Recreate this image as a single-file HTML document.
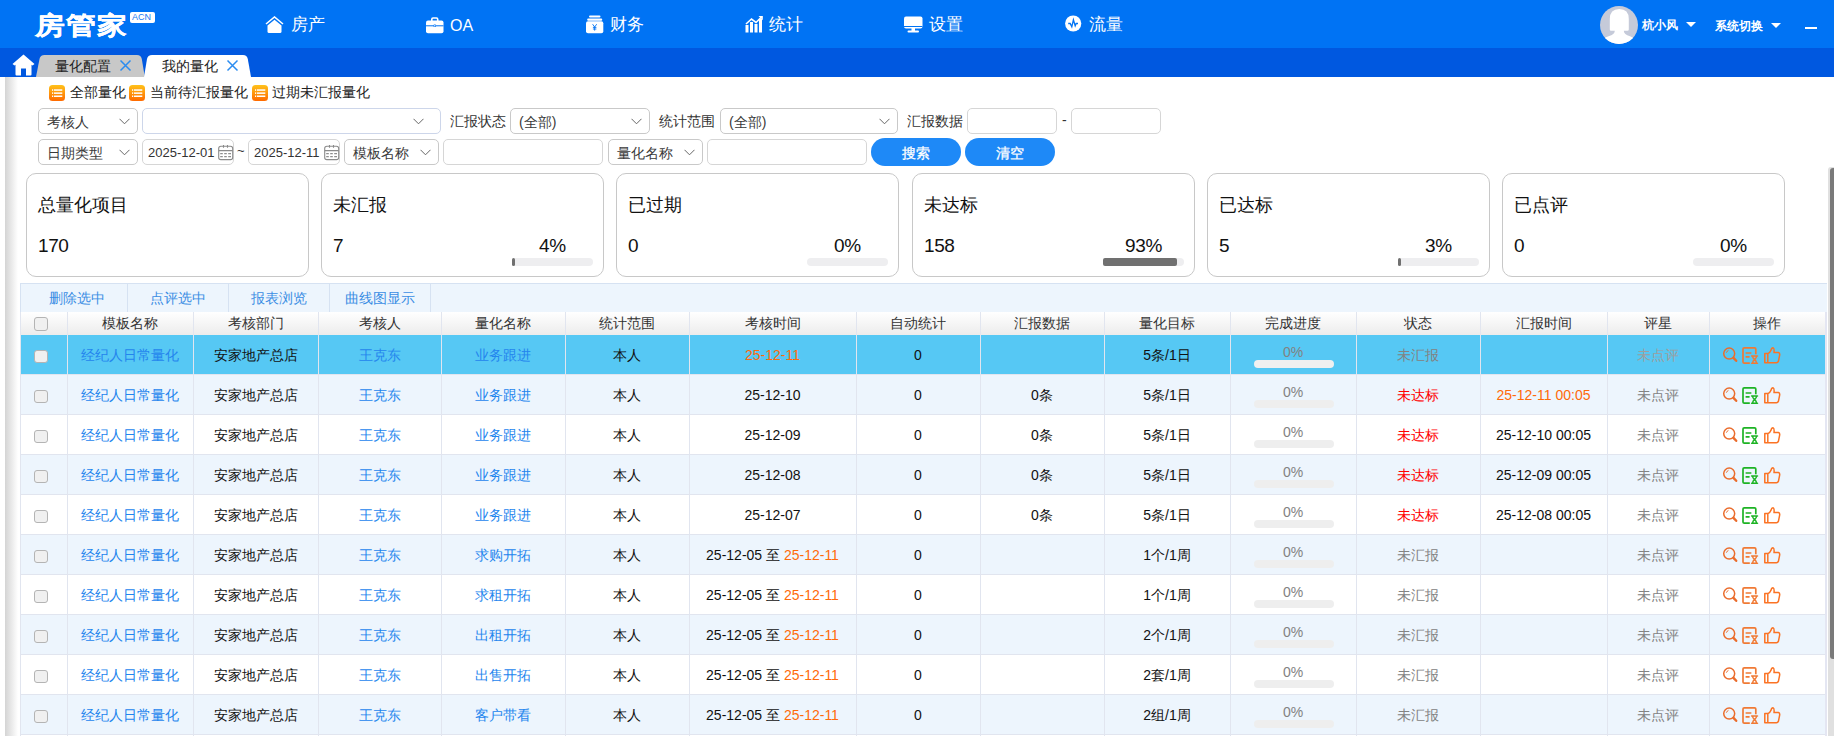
<!DOCTYPE html><html><head><meta charset="utf-8"><title>我的量化</title><style>
*{box-sizing:border-box;margin:0;padding:0}
html,body{width:1834px;height:736px;overflow:hidden;background:#fff}
body{position:relative;font-family:"Liberation Sans",sans-serif;color:#111;font-size:14px}
.ab{position:absolute}
.t{position:absolute;white-space:nowrap;line-height:1}
#hdr{left:0;top:0;width:1834px;height:48px;background:#0073f4}
#tabs{left:0;top:48px;width:1834px;height:29px;background:#0058e0}
.nav{color:#fff;font-size:16px}
.sel{position:absolute;height:26px;border:1px solid #c9c9c9;border-radius:5px;background:#fff}
.inp{position:absolute;height:26px;border:1px solid #d6d6d6;border-radius:5px;background:#fff}
.chev{position:absolute;width:11px;height:7px}
.btn{position:absolute;height:28px;border-radius:14px;background:#1e89f7;color:#fff;font-size:14px;text-align:center;line-height:30px;-webkit-text-stroke:0.3px #fff}
.card{position:absolute;top:173px;width:283px;height:104px;border:1px solid #c8c8c8;border-radius:10px;background:#fff}
.ct{position:absolute;left:11px;top:22px;font-size:18px;line-height:18px;white-space:nowrap}
.cn{position:absolute;left:11px;top:62px;font-size:19px;line-height:19px;white-space:nowrap;letter-spacing:-0.4px}
.cp{position:absolute;right:10px;width:81px;top:62px;font-size:19px;line-height:19px;white-space:nowrap;text-align:center;letter-spacing:-0.3px}
.trk{position:absolute;right:10px;top:84px;width:81px;height:8px;border-radius:4px;background:#eeeef0}
.fil{position:absolute;left:0;top:0;height:8px;background:#707070;border-radius:2px}
.cell{position:absolute;text-align:center;white-space:nowrap;font-size:14px;line-height:14px}
.lk{color:#2485ee}
.or{color:#ff6a0a}
.rd{color:#ff0000}
.gy{color:#828282}
.cb{position:absolute;width:14px;height:14px;border:1px solid #b4b4b4;border-radius:3px;background:#f0f0f0}
</style></head><body>
<div id="hdr" class="ab"></div>
<div class="t" style="left:35px;top:13px;font-size:30px;font-weight:bold;color:#fff;letter-spacing:1px;transform:scaleY(0.84);transform-origin:0 0;-webkit-text-stroke:0.35px #fff">房管家</div>
<div class="ab" style="left:130px;top:12px;width:25px;height:11px;background:#fff;border-radius:2px"></div>
<div class="t" style="left:132px;top:13px;font-size:9px;color:#1a78f2">ACN</div>
<div class="t nav" style="left:291px;top:15.5px;font-size:17px">房产</div>
<div class="t nav" style="left:610px;top:15.5px;font-size:17px">财务</div>
<div class="t nav" style="left:769px;top:15.5px;font-size:17px">统计</div>
<div class="t nav" style="left:928.5px;top:15.5px;font-size:17px">设置</div>
<div class="t nav" style="left:1088.5px;top:15.5px;font-size:17px">流量</div>
<div class="t nav" style="left:450px;top:17.5px;font-size:16px">OA</div>
<svg class="ab" style="left:265px;top:16px" width="19" height="17" viewBox="0 0 19 17"><path d="M1 8 L9.5 1 L18 8" fill="none" stroke="#fff" stroke-width="1.6"/><path d="M2.5 9.5 L9.5 3.8 L16.5 9.5 V15.5 Q16.5 17 15 17 H4 Q2.5 17 2.5 15.5Z" fill="#fff"/></svg>
<svg class="ab" style="left:426px;top:17px" width="18" height="17" viewBox="0 0 18 17"><path d="M5.8 4 V2.2 Q5.8 1 7 1 H10.5 Q11.7 1 11.7 2.2 V4" fill="none" stroke="#fff" stroke-width="1.6"/><rect x="0" y="3.5" width="17.5" height="12.8" rx="2" fill="#fff"/><rect x="0" y="8.3" width="17.5" height="1" fill="#0073f4"/><rect x="7.6" y="7.5" width="2.3" height="2.6" rx="0.5" fill="#0073f4"/><rect x="8.2" y="8.1" width="1.1" height="1.4" fill="#fff"/></svg>
<svg class="ab" style="left:586px;top:15px" width="18" height="19" viewBox="0 0 18 19"><rect x="3" y="0.6" width="11.5" height="2" rx="1" fill="#fff"/><rect x="1.2" y="3.5" width="15" height="2.2" rx="1" fill="#fff"/><rect x="0" y="6.3" width="17.3" height="11.9" rx="2" fill="#fff"/><path d="M6.6 9.2 L8.65 12 L10.7 9.2 M8.65 12 V15.6 M6.9 12.4 H10.4 M6.9 14 H10.4" fill="none" stroke="#0073f4" stroke-width="0.9"/></svg>
<svg class="ab" style="left:745px;top:15px" width="19" height="18" viewBox="0 0 19 18"><rect x="0.5" y="10" width="3" height="7.5" fill="#fff"/><rect x="5" y="7" width="3" height="10.5" fill="#fff"/><rect x="9.5" y="9" width="3" height="8.5" fill="#fff"/><rect x="14" y="4" width="3" height="13.5" fill="#fff"/><path d="M1 9 L6.5 4 L11 7.5 L17 1.5" fill="none" stroke="#fff" stroke-width="1.6"/><path d="M13.5 1 H17.8 V5.3Z" fill="#fff"/></svg>
<svg class="ab" style="left:904px;top:16px" width="19" height="17" viewBox="0 0 19 17"><rect x="0" y="0.5" width="18.5" height="12" rx="2" fill="#fff"/><rect x="7.5" y="12" width="3.5" height="3" fill="#fff"/><rect x="3.5" y="14.5" width="11.5" height="2" rx="1" fill="#fff"/><rect x="0" y="10" width="18.5" height="1" fill="#0073f4"/></svg>
<svg class="ab" style="left:1065px;top:15px" width="17" height="17" viewBox="0 0 17 17"><circle cx="8.2" cy="8.5" r="8.1" fill="#fff"/><path d="M3.2 8.5 H5.2 L6.8 11.8 L8.4 4.8 L10.2 10.8 L11.2 8.5 H13" fill="none" stroke="#0073f4" stroke-width="1.3"/></svg>
<svg class="ab" style="left:1600px;top:6px" width="38" height="38" viewBox="0 0 38 38"><defs><clipPath id="cc"><circle cx="19" cy="19" r="19"/></clipPath></defs><circle cx="19" cy="19" r="19" fill="#c5cad9"/><g clip-path="url(#cc)" fill="#fff"><path d="M9.8 23.5 V13 Q9.8 3 19.3 3 Q28.8 3 28.8 13 V23.5 Q28.8 24.8 27.5 24.8 H23.8 Q23.8 28.6 30 30.2 Q35 31.8 38 36 V38 H0 V36 Q3 31.8 8.6 30.2 Q14.8 28.6 14.8 24.8 H11 Q9.8 24.8 9.8 23.5Z"/></g></svg>
<div class="t" style="left:1641.5px;top:18.5px;font-size:12px;font-weight:bold;color:#fff">杭小风</div>
<div class="ab" style="left:1686px;top:22px;width:0;height:0;border-left:5px solid transparent;border-right:5px solid transparent;border-top:5px solid #fff"></div>
<div class="t" style="left:1715px;top:20px;font-size:12px;font-weight:bold;color:#fff">系统切换</div>
<div class="ab" style="left:1771px;top:23px;width:0;height:0;border-left:5px solid transparent;border-right:5px solid transparent;border-top:5px solid #fff"></div>
<div class="ab" style="left:1805px;top:27px;width:12px;height:2px;background:#fff"></div>
<div id="tabs" class="ab"></div>
<svg class="ab" style="left:12px;top:54px" width="23" height="22" viewBox="0 0 23 22"><path d="M11.5 0.5 L22.5 10 L20.5 11.5 L19.5 10.8 V20.5 Q19.5 21.5 18.5 21.5 H14 V14.5 H9 V21.5 H4.5 Q3.5 21.5 3.5 20.5 V10.8 L2.5 11.5 L0.5 10Z" fill="#fff"/></svg>
<svg class="ab" style="left:36px;top:55px" width="110" height="22" viewBox="0 0 110 22"><path d="M0 22 L3.5 4 Q4.3 0 8.5 0 H101 Q105 0 105.8 4 L108.8 22Z" fill="#c8c8c8"/></svg>
<div class="t" style="left:55px;top:59px;font-size:14px;color:#222">量化配置</div>
<svg class="ab" style="left:119px;top:59px" width="13" height="13" viewBox="0 0 13 13"><path d="M1.5 1.5 L11.5 11.5 M11.5 1.5 L1.5 11.5" stroke="#2b8cf0" stroke-width="1.5"/></svg>
<svg class="ab" style="left:143px;top:55px" width="110" height="22" viewBox="0 0 110 22"><path d="M1 22 L4 4 Q4.8 0 9 0 H100 Q104 0 104.8 4 L108 22Z" fill="#fff"/></svg>
<div class="t" style="left:162px;top:59px;font-size:14px;color:#222">我的量化</div>
<svg class="ab" style="left:226px;top:59px" width="13" height="13" viewBox="0 0 13 13"><path d="M1.5 1.5 L11.5 11.5 M11.5 1.5 L1.5 11.5" stroke="#2b8cf0" stroke-width="1.5"/></svg>
<div class="ab" style="left:5px;top:77px;width:13px;height:659px;background:linear-gradient(to right,#d4d4d4,#fff)"></div>
<svg class="ab" style="left:49px;top:85px" width="16" height="16" viewBox="0 0 16 16"><defs><linearGradient id="og49" x1="0" y1="0" x2="0" y2="1"><stop offset="0" stop-color="#ffc21a"/><stop offset="1" stop-color="#ff6a00"/></linearGradient></defs><rect x="0" y="0" width="16" height="16" rx="3.5" fill="url(#og49)"/><g fill="#fff"><rect x="3" y="4.3" width="1.2" height="1.5"/><rect x="5" y="4.3" width="8.3" height="1.5"/><rect x="3" y="7.4" width="1.2" height="1.5"/><rect x="5" y="7.4" width="8.3" height="1.5"/><rect x="3" y="10.5" width="1.2" height="1.5"/><rect x="5" y="10.5" width="8.3" height="1.5"/></g></svg>
<div class="t" style="left:70px;top:85px;font-size:14px;color:#222">全部量化</div>
<svg class="ab" style="left:129px;top:85px" width="16" height="16" viewBox="0 0 16 16"><defs><linearGradient id="og129" x1="0" y1="0" x2="0" y2="1"><stop offset="0" stop-color="#ffc21a"/><stop offset="1" stop-color="#ff6a00"/></linearGradient></defs><rect x="0" y="0" width="16" height="16" rx="3.5" fill="url(#og129)"/><g fill="#fff"><rect x="3" y="4.3" width="1.2" height="1.5"/><rect x="5" y="4.3" width="8.3" height="1.5"/><rect x="3" y="7.4" width="1.2" height="1.5"/><rect x="5" y="7.4" width="8.3" height="1.5"/><rect x="3" y="10.5" width="1.2" height="1.5"/><rect x="5" y="10.5" width="8.3" height="1.5"/></g></svg>
<div class="t" style="left:150px;top:85px;font-size:14px;color:#222">当前待汇报量化</div>
<svg class="ab" style="left:252px;top:85px" width="16" height="16" viewBox="0 0 16 16"><defs><linearGradient id="og252" x1="0" y1="0" x2="0" y2="1"><stop offset="0" stop-color="#ffc21a"/><stop offset="1" stop-color="#ff6a00"/></linearGradient></defs><rect x="0" y="0" width="16" height="16" rx="3.5" fill="url(#og252)"/><g fill="#fff"><rect x="3" y="4.3" width="1.2" height="1.5"/><rect x="5" y="4.3" width="8.3" height="1.5"/><rect x="3" y="7.4" width="1.2" height="1.5"/><rect x="5" y="7.4" width="8.3" height="1.5"/><rect x="3" y="10.5" width="1.2" height="1.5"/><rect x="5" y="10.5" width="8.3" height="1.5"/></g></svg>
<div class="t" style="left:272px;top:85px;font-size:14px;color:#222">过期未汇报量化</div>
<div class="sel" style="left:38px;top:108px;width:100px"></div><div class="t" style="left:47px;top:115px;font-size:14px;color:#3a3a3a">考核人</div><svg class="chev" style="left:119px;top:118px" viewBox="0 0 11 7"><path d="M0.5 0.8 L5.5 5.8 L10.5 0.8" fill="none" stroke="#666" stroke-width="1"/></svg>
<div class="sel" style="left:142px;top:108px;width:299px;border-color:#cdd6ea"></div><svg class="chev" style="left:412.5px;top:118px" viewBox="0 0 11 7"><path d="M0.5 0.8 L5.5 5.8 L10.5 0.8" fill="none" stroke="#666" stroke-width="1"/></svg>
<div class="t" style="left:450px;top:114px;font-size:14px;color:#333">汇报状态</div>
<div class="sel" style="left:510px;top:108px;width:140px"></div><div class="t" style="left:519px;top:115px;font-size:14px;color:#3a3a3a">(全部)</div><svg class="chev" style="left:631px;top:118px" viewBox="0 0 11 7"><path d="M0.5 0.8 L5.5 5.8 L10.5 0.8" fill="none" stroke="#666" stroke-width="1"/></svg>
<div class="t" style="left:659px;top:114px;font-size:14px;color:#333">统计范围</div>
<div class="sel" style="left:720px;top:108px;width:178px"></div><div class="t" style="left:729px;top:115px;font-size:14px;color:#3a3a3a">(全部)</div><svg class="chev" style="left:879px;top:118px" viewBox="0 0 11 7"><path d="M0.5 0.8 L5.5 5.8 L10.5 0.8" fill="none" stroke="#666" stroke-width="1"/></svg>
<div class="t" style="left:907px;top:114px;font-size:14px;color:#333">汇报数据</div>
<div class="inp" style="left:967px;top:108px;width:90px"></div>
<div class="t" style="left:1062px;top:113px;font-size:14px;color:#333">-</div>
<div class="inp" style="left:1071px;top:108px;width:90px"></div>
<div class="sel" style="left:38px;top:139px;width:100px"></div><div class="t" style="left:47px;top:146px;font-size:14px;color:#3a3a3a">日期类型</div><svg class="chev" style="left:119px;top:149px" viewBox="0 0 11 7"><path d="M0.5 0.8 L5.5 5.8 L10.5 0.8" fill="none" stroke="#666" stroke-width="1"/></svg>
<div class="inp" style="left:142px;top:139px;width:92px"></div>
<div class="t" style="left:148px;top:146px;font-size:13px;color:#333">2025-12-01</div>
<svg class="ab" style="left:217.5px;top:144.5px" width="16" height="16" viewBox="0 0 16 16"><rect x="0.7" y="1.2" width="14" height="13.4" rx="2.2" fill="none" stroke="#8a8a8a" stroke-width="1.1"/><path d="M0.7 5.6 H14.7 M5.5 0 V2.8 M9.5 0 V2.8" stroke="#8a8a8a" stroke-width="1.1"/><path d="M2.2 8.6 H4.8 M6.2 8.6 H8.8 M10.2 8.6 H13 M2.2 11.6 H4.8 M6.2 11.6 H8.8 M10.2 11.6 H13" stroke="#8e8e8e" stroke-width="1.1"/></svg>
<div class="t" style="left:237px;top:144px;font-size:13px;color:#333">~</div>
<div class="inp" style="left:248px;top:139px;width:92px"></div>
<div class="t" style="left:254px;top:146px;font-size:13px;color:#333">2025-12-11</div>
<svg class="ab" style="left:323.5px;top:144.5px" width="16" height="16" viewBox="0 0 16 16"><rect x="0.7" y="1.2" width="14" height="13.4" rx="2.2" fill="none" stroke="#8a8a8a" stroke-width="1.1"/><path d="M0.7 5.6 H14.7 M5.5 0 V2.8 M9.5 0 V2.8" stroke="#8a8a8a" stroke-width="1.1"/><path d="M2.2 8.6 H4.8 M6.2 8.6 H8.8 M10.2 8.6 H13 M2.2 11.6 H4.8 M6.2 11.6 H8.8 M10.2 11.6 H13" stroke="#8e8e8e" stroke-width="1.1"/></svg>
<div class="sel" style="left:344px;top:139px;width:95px"></div><div class="t" style="left:353px;top:146px;font-size:14px;color:#3a3a3a">模板名称</div><svg class="chev" style="left:420px;top:149px" viewBox="0 0 11 7"><path d="M0.5 0.8 L5.5 5.8 L10.5 0.8" fill="none" stroke="#666" stroke-width="1"/></svg>
<div class="inp" style="left:443px;top:139px;width:160px"></div>
<div class="sel" style="left:608px;top:139px;width:95px"></div><div class="t" style="left:617px;top:146px;font-size:14px;color:#3a3a3a">量化名称</div><svg class="chev" style="left:684px;top:149px" viewBox="0 0 11 7"><path d="M0.5 0.8 L5.5 5.8 L10.5 0.8" fill="none" stroke="#666" stroke-width="1"/></svg>
<div class="inp" style="left:707px;top:139px;width:160px"></div>
<div class="btn" style="left:871px;top:138px;width:90px">搜索</div>
<div class="btn" style="left:965px;top:138px;width:90px">清空</div>
<div class="card" style="left:26px"><div class="ct">总量化项目</div><div class="cn">170</div></div>
<div class="card" style="left:321px"><div class="ct">未汇报</div><div class="cn">7</div><div class="cp">4%</div><div class="trk"><div class="fil" style="width:3px"></div></div></div>
<div class="card" style="left:616px"><div class="ct">已过期</div><div class="cn">0</div><div class="cp">0%</div><div class="trk"></div></div>
<div class="card" style="left:912px"><div class="ct">未达标</div><div class="cn">158</div><div class="cp">93%</div><div class="trk"><div class="fil" style="width:74px"></div></div></div>
<div class="card" style="left:1207px"><div class="ct">已达标</div><div class="cn">5</div><div class="cp">3%</div><div class="trk"><div class="fil" style="width:3px"></div></div></div>
<div class="card" style="left:1502px"><div class="ct">已点评</div><div class="cn">0</div><div class="cp">0%</div><div class="trk"></div></div>
<div class="ab" style="left:20px;top:283px;width:1807px;height:29px;background:#edf5fd;border-top:1px solid #d6e2f2;border-left:1px solid #d6e2f2"></div>
<div class="t" style="left:26px;width:101px;top:291px;font-size:14px;color:#3c8ee4;text-align:center">删除选中</div>
<div class="ab" style="left:127px;top:284px;width:1px;height:28px;background:#d6e2f2"></div>
<div class="t" style="left:128px;width:100px;top:291px;font-size:14px;color:#3c8ee4;text-align:center">点评选中</div>
<div class="ab" style="left:228px;top:284px;width:1px;height:28px;background:#d6e2f2"></div>
<div class="t" style="left:229px;width:100px;top:291px;font-size:14px;color:#3c8ee4;text-align:center">报表浏览</div>
<div class="ab" style="left:329px;top:284px;width:1px;height:28px;background:#d6e2f2"></div>
<div class="t" style="left:330px;width:100px;top:291px;font-size:14px;color:#3c8ee4;text-align:center">曲线图显示</div>
<div class="ab" style="left:430px;top:284px;width:1px;height:28px;background:#d6e2f2"></div>
<div class="ab" style="left:21px;top:312px;width:1804px;height:23px;background:linear-gradient(#fff,#ececec)"></div>
<div class="cell" style="left:67px;width:126px;top:316px;color:#333">模板名称</div>
<div class="cell" style="left:193px;width:125px;top:316px;color:#333">考核部门</div>
<div class="cell" style="left:318px;width:123px;top:316px;color:#333">考核人</div>
<div class="cell" style="left:441px;width:124px;top:316px;color:#333">量化名称</div>
<div class="cell" style="left:565px;width:124px;top:316px;color:#333">统计范围</div>
<div class="cell" style="left:689px;width:167px;top:316px;color:#333">考核时间</div>
<div class="cell" style="left:856px;width:124px;top:316px;color:#333">自动统计</div>
<div class="cell" style="left:980px;width:124px;top:316px;color:#333">汇报数据</div>
<div class="cell" style="left:1104px;width:126px;top:316px;color:#333">量化目标</div>
<div class="cell" style="left:1230px;width:126px;top:316px;color:#333">完成进度</div>
<div class="cell" style="left:1356px;width:124px;top:316px;color:#333">状态</div>
<div class="cell" style="left:1480px;width:127px;top:316px;color:#333">汇报时间</div>
<div class="cell" style="left:1607px;width:102px;top:316px;color:#333">评星</div>
<div class="cell" style="left:1709px;width:116px;top:316px;color:#333">操作</div>
<div class="ab" style="left:67px;top:312px;width:1px;height:424px;background:#e1e5ef"></div>
<div class="ab" style="left:193px;top:312px;width:1px;height:424px;background:#e1e5ef"></div>
<div class="ab" style="left:318px;top:312px;width:1px;height:424px;background:#e1e5ef"></div>
<div class="ab" style="left:441px;top:312px;width:1px;height:424px;background:#e1e5ef"></div>
<div class="ab" style="left:565px;top:312px;width:1px;height:424px;background:#e1e5ef"></div>
<div class="ab" style="left:689px;top:312px;width:1px;height:424px;background:#e1e5ef"></div>
<div class="ab" style="left:856px;top:312px;width:1px;height:424px;background:#e1e5ef"></div>
<div class="ab" style="left:980px;top:312px;width:1px;height:424px;background:#e1e5ef"></div>
<div class="ab" style="left:1104px;top:312px;width:1px;height:424px;background:#e1e5ef"></div>
<div class="ab" style="left:1230px;top:312px;width:1px;height:424px;background:#e1e5ef"></div>
<div class="ab" style="left:1356px;top:312px;width:1px;height:424px;background:#e1e5ef"></div>
<div class="ab" style="left:1480px;top:312px;width:1px;height:424px;background:#e1e5ef"></div>
<div class="ab" style="left:1607px;top:312px;width:1px;height:424px;background:#e1e5ef"></div>
<div class="ab" style="left:1709px;top:312px;width:1px;height:424px;background:#e1e5ef"></div>
<div class="cb" style="left:34px;top:317px"></div>
<div class="ab" style="left:21px;top:335px;width:1804px;height:40px;background:#56c8f4;border-bottom:1px solid #e1e5ef"></div>
<div class="ab" style="left:21px;top:375px;width:1804px;height:40px;background:#edf5fd;border-bottom:1px solid #e1e5ef"></div>
<div class="ab" style="left:21px;top:415px;width:1804px;height:40px;background:#fff;border-bottom:1px solid #e1e5ef"></div>
<div class="ab" style="left:21px;top:455px;width:1804px;height:40px;background:#edf5fd;border-bottom:1px solid #e1e5ef"></div>
<div class="ab" style="left:21px;top:495px;width:1804px;height:40px;background:#fff;border-bottom:1px solid #e1e5ef"></div>
<div class="ab" style="left:21px;top:535px;width:1804px;height:40px;background:#edf5fd;border-bottom:1px solid #e1e5ef"></div>
<div class="ab" style="left:21px;top:575px;width:1804px;height:40px;background:#fff;border-bottom:1px solid #e1e5ef"></div>
<div class="ab" style="left:21px;top:615px;width:1804px;height:40px;background:#edf5fd;border-bottom:1px solid #e1e5ef"></div>
<div class="ab" style="left:21px;top:655px;width:1804px;height:40px;background:#fff;border-bottom:1px solid #e1e5ef"></div>
<div class="ab" style="left:21px;top:695px;width:1804px;height:40px;background:#edf5fd;border-bottom:1px solid #e1e5ef"></div>
<div class="ab" style="left:67px;top:312px;width:1px;height:424px;background:#e1e5ef"></div>
<div class="ab" style="left:193px;top:312px;width:1px;height:424px;background:#e1e5ef"></div>
<div class="ab" style="left:318px;top:312px;width:1px;height:424px;background:#e1e5ef"></div>
<div class="ab" style="left:441px;top:312px;width:1px;height:424px;background:#e1e5ef"></div>
<div class="ab" style="left:565px;top:312px;width:1px;height:424px;background:#e1e5ef"></div>
<div class="ab" style="left:689px;top:312px;width:1px;height:424px;background:#e1e5ef"></div>
<div class="ab" style="left:856px;top:312px;width:1px;height:424px;background:#e1e5ef"></div>
<div class="ab" style="left:980px;top:312px;width:1px;height:424px;background:#e1e5ef"></div>
<div class="ab" style="left:1104px;top:312px;width:1px;height:424px;background:#e1e5ef"></div>
<div class="ab" style="left:1230px;top:312px;width:1px;height:424px;background:#e1e5ef"></div>
<div class="ab" style="left:1356px;top:312px;width:1px;height:424px;background:#e1e5ef"></div>
<div class="ab" style="left:1480px;top:312px;width:1px;height:424px;background:#e1e5ef"></div>
<div class="ab" style="left:1607px;top:312px;width:1px;height:424px;background:#e1e5ef"></div>
<div class="ab" style="left:1709px;top:312px;width:1px;height:424px;background:#e1e5ef"></div>
<div class="cb" style="left:34px;top:349.5px;height:13.5px"></div>
<div class="cell lk" style="left:67px;width:126px;top:348px">经纪人日常量化</div>
<div class="cell " style="left:193px;width:125px;top:348px">安家地产总店</div>
<div class="cell lk" style="left:318px;width:123px;top:348px">王克东</div>
<div class="cell lk" style="left:441px;width:124px;top:348px">业务跟进</div>
<div class="cell " style="left:565px;width:124px;top:348px">本人</div>
<div class="cell or" style="left:689px;width:167px;top:348px">25-12-11</div>
<div class="cell " style="left:856px;width:124px;top:348px">0</div>
<div class="cell " style="left:980px;width:124px;top:348px"></div>
<div class="cell " style="left:1104px;width:126px;top:348px">5条/1日</div>
<div class="cell gy" style="left:1230px;width:126px;top:345px">0%</div>
<div class="ab" style="left:1254px;top:360px;width:80px;height:8px;border-radius:4px;background:#f0f0f0"></div>
<div class="cell gy" style="left:1356px;width:124px;top:348px">未汇报</div>
<div class="cell " style="left:1607px;width:102px;top:348px"><span style="color:#9e9e9e">未点评</span></div>
<svg class="ab" style="left:1722px;top:347px" width="60" height="18" viewBox="0 0 60 18"><g fill="none" stroke-linecap="round"><circle cx="7.2" cy="6.6" r="5.5" stroke="#ea6c2c" stroke-width="1.5"/><path d="M4.5 5.3 Q5 4 6.1 3.5" stroke="#ea6c2c" stroke-width="1"/><path d="M11.5 10.9 L14.2 13.8" stroke="#ea6c2c" stroke-width="2.4"/>
<path d="M27.8 16.2 H22.3 Q21 16.2 21 14.9 V2.1 Q21 0.9 22.2 0.9 H32.6 Q33.8 0.9 33.8 2.1 V7.3" stroke="#f07a35" stroke-width="1.7" stroke-linecap="butt"/><path d="M24.2 6 H28.8 M24.2 9.9 H27" stroke="#f07a35" stroke-width="1.6"/><path d="M29.6 8.9 H35.5 M29.6 16.3 H35.5 M30.6 9 Q30.6 11.4 32.55 12.6 Q30.6 13.8 30.6 16.2 M34.5 9 Q34.5 11.4 32.55 12.6 Q34.5 13.8 34.5 16.2" stroke="#f07a35" stroke-width="1.5"/>
<path d="M42.8 6.6 H46 Q48 5.8 49 3.3 Q49.5 0.8 51 0.8 Q52.5 1.2 52 5.6 H56.3 Q58.1 6 57.6 8.3 L56.4 14.3 Q55.9 15.8 54.4 15.8 H42.8Z M45.8 6.8 V15.8" stroke="#fb7324" stroke-width="1.5" stroke-linejoin="round"/></g></svg>
<div class="cb" style="left:34px;top:389.5px;height:13.5px"></div>
<div class="cell lk" style="left:67px;width:126px;top:388px">经纪人日常量化</div>
<div class="cell " style="left:193px;width:125px;top:388px">安家地产总店</div>
<div class="cell lk" style="left:318px;width:123px;top:388px">王克东</div>
<div class="cell lk" style="left:441px;width:124px;top:388px">业务跟进</div>
<div class="cell " style="left:565px;width:124px;top:388px">本人</div>
<div class="cell " style="left:689px;width:167px;top:388px">25-12-10</div>
<div class="cell " style="left:856px;width:124px;top:388px">0</div>
<div class="cell " style="left:980px;width:124px;top:388px">0条</div>
<div class="cell " style="left:1104px;width:126px;top:388px">5条/1日</div>
<div class="cell gy" style="left:1230px;width:126px;top:385px">0%</div>
<div class="ab" style="left:1254px;top:400px;width:80px;height:8px;border-radius:4px;background:#eeeeee"></div>
<div class="cell rd" style="left:1356px;width:124px;top:388px">未达标</div>
<div class="cell or" style="left:1480px;width:127px;top:388px">25-12-11 00:05</div>
<div class="cell gy" style="left:1607px;width:102px;top:388px">未点评</div>
<svg class="ab" style="left:1722px;top:387px" width="60" height="18" viewBox="0 0 60 18"><g fill="none" stroke-linecap="round"><circle cx="7.2" cy="6.6" r="5.5" stroke="#ea6c2c" stroke-width="1.5"/><path d="M4.5 5.3 Q5 4 6.1 3.5" stroke="#ea6c2c" stroke-width="1"/><path d="M11.5 10.9 L14.2 13.8" stroke="#ea6c2c" stroke-width="2.4"/>
<path d="M27.8 16.2 H22.3 Q21 16.2 21 14.9 V2.1 Q21 0.9 22.2 0.9 H32.6 Q33.8 0.9 33.8 2.1 V7.3" stroke="#1db324" stroke-width="1.7" stroke-linecap="butt"/><path d="M24.2 6 H28.8 M24.2 9.9 H27" stroke="#1db324" stroke-width="1.6"/><path d="M29.6 8.9 H35.5 M29.6 16.3 H35.5 M30.6 9 Q30.6 11.4 32.55 12.6 Q30.6 13.8 30.6 16.2 M34.5 9 Q34.5 11.4 32.55 12.6 Q34.5 13.8 34.5 16.2" stroke="#1db324" stroke-width="1.5"/>
<path d="M42.8 6.6 H46 Q48 5.8 49 3.3 Q49.5 0.8 51 0.8 Q52.5 1.2 52 5.6 H56.3 Q58.1 6 57.6 8.3 L56.4 14.3 Q55.9 15.8 54.4 15.8 H42.8Z M45.8 6.8 V15.8" stroke="#fb7324" stroke-width="1.5" stroke-linejoin="round"/></g></svg>
<div class="cb" style="left:34px;top:429.5px;height:13.5px"></div>
<div class="cell lk" style="left:67px;width:126px;top:428px">经纪人日常量化</div>
<div class="cell " style="left:193px;width:125px;top:428px">安家地产总店</div>
<div class="cell lk" style="left:318px;width:123px;top:428px">王克东</div>
<div class="cell lk" style="left:441px;width:124px;top:428px">业务跟进</div>
<div class="cell " style="left:565px;width:124px;top:428px">本人</div>
<div class="cell " style="left:689px;width:167px;top:428px">25-12-09</div>
<div class="cell " style="left:856px;width:124px;top:428px">0</div>
<div class="cell " style="left:980px;width:124px;top:428px">0条</div>
<div class="cell " style="left:1104px;width:126px;top:428px">5条/1日</div>
<div class="cell gy" style="left:1230px;width:126px;top:425px">0%</div>
<div class="ab" style="left:1254px;top:440px;width:80px;height:8px;border-radius:4px;background:#eeeeee"></div>
<div class="cell rd" style="left:1356px;width:124px;top:428px">未达标</div>
<div class="cell " style="left:1480px;width:127px;top:428px">25-12-10 00:05</div>
<div class="cell gy" style="left:1607px;width:102px;top:428px">未点评</div>
<svg class="ab" style="left:1722px;top:427px" width="60" height="18" viewBox="0 0 60 18"><g fill="none" stroke-linecap="round"><circle cx="7.2" cy="6.6" r="5.5" stroke="#ea6c2c" stroke-width="1.5"/><path d="M4.5 5.3 Q5 4 6.1 3.5" stroke="#ea6c2c" stroke-width="1"/><path d="M11.5 10.9 L14.2 13.8" stroke="#ea6c2c" stroke-width="2.4"/>
<path d="M27.8 16.2 H22.3 Q21 16.2 21 14.9 V2.1 Q21 0.9 22.2 0.9 H32.6 Q33.8 0.9 33.8 2.1 V7.3" stroke="#1db324" stroke-width="1.7" stroke-linecap="butt"/><path d="M24.2 6 H28.8 M24.2 9.9 H27" stroke="#1db324" stroke-width="1.6"/><path d="M29.6 8.9 H35.5 M29.6 16.3 H35.5 M30.6 9 Q30.6 11.4 32.55 12.6 Q30.6 13.8 30.6 16.2 M34.5 9 Q34.5 11.4 32.55 12.6 Q34.5 13.8 34.5 16.2" stroke="#1db324" stroke-width="1.5"/>
<path d="M42.8 6.6 H46 Q48 5.8 49 3.3 Q49.5 0.8 51 0.8 Q52.5 1.2 52 5.6 H56.3 Q58.1 6 57.6 8.3 L56.4 14.3 Q55.9 15.8 54.4 15.8 H42.8Z M45.8 6.8 V15.8" stroke="#fb7324" stroke-width="1.5" stroke-linejoin="round"/></g></svg>
<div class="cb" style="left:34px;top:469.5px;height:13.5px"></div>
<div class="cell lk" style="left:67px;width:126px;top:468px">经纪人日常量化</div>
<div class="cell " style="left:193px;width:125px;top:468px">安家地产总店</div>
<div class="cell lk" style="left:318px;width:123px;top:468px">王克东</div>
<div class="cell lk" style="left:441px;width:124px;top:468px">业务跟进</div>
<div class="cell " style="left:565px;width:124px;top:468px">本人</div>
<div class="cell " style="left:689px;width:167px;top:468px">25-12-08</div>
<div class="cell " style="left:856px;width:124px;top:468px">0</div>
<div class="cell " style="left:980px;width:124px;top:468px">0条</div>
<div class="cell " style="left:1104px;width:126px;top:468px">5条/1日</div>
<div class="cell gy" style="left:1230px;width:126px;top:465px">0%</div>
<div class="ab" style="left:1254px;top:480px;width:80px;height:8px;border-radius:4px;background:#eeeeee"></div>
<div class="cell rd" style="left:1356px;width:124px;top:468px">未达标</div>
<div class="cell " style="left:1480px;width:127px;top:468px">25-12-09 00:05</div>
<div class="cell gy" style="left:1607px;width:102px;top:468px">未点评</div>
<svg class="ab" style="left:1722px;top:467px" width="60" height="18" viewBox="0 0 60 18"><g fill="none" stroke-linecap="round"><circle cx="7.2" cy="6.6" r="5.5" stroke="#ea6c2c" stroke-width="1.5"/><path d="M4.5 5.3 Q5 4 6.1 3.5" stroke="#ea6c2c" stroke-width="1"/><path d="M11.5 10.9 L14.2 13.8" stroke="#ea6c2c" stroke-width="2.4"/>
<path d="M27.8 16.2 H22.3 Q21 16.2 21 14.9 V2.1 Q21 0.9 22.2 0.9 H32.6 Q33.8 0.9 33.8 2.1 V7.3" stroke="#1db324" stroke-width="1.7" stroke-linecap="butt"/><path d="M24.2 6 H28.8 M24.2 9.9 H27" stroke="#1db324" stroke-width="1.6"/><path d="M29.6 8.9 H35.5 M29.6 16.3 H35.5 M30.6 9 Q30.6 11.4 32.55 12.6 Q30.6 13.8 30.6 16.2 M34.5 9 Q34.5 11.4 32.55 12.6 Q34.5 13.8 34.5 16.2" stroke="#1db324" stroke-width="1.5"/>
<path d="M42.8 6.6 H46 Q48 5.8 49 3.3 Q49.5 0.8 51 0.8 Q52.5 1.2 52 5.6 H56.3 Q58.1 6 57.6 8.3 L56.4 14.3 Q55.9 15.8 54.4 15.8 H42.8Z M45.8 6.8 V15.8" stroke="#fb7324" stroke-width="1.5" stroke-linejoin="round"/></g></svg>
<div class="cb" style="left:34px;top:509.5px;height:13.5px"></div>
<div class="cell lk" style="left:67px;width:126px;top:508px">经纪人日常量化</div>
<div class="cell " style="left:193px;width:125px;top:508px">安家地产总店</div>
<div class="cell lk" style="left:318px;width:123px;top:508px">王克东</div>
<div class="cell lk" style="left:441px;width:124px;top:508px">业务跟进</div>
<div class="cell " style="left:565px;width:124px;top:508px">本人</div>
<div class="cell " style="left:689px;width:167px;top:508px">25-12-07</div>
<div class="cell " style="left:856px;width:124px;top:508px">0</div>
<div class="cell " style="left:980px;width:124px;top:508px">0条</div>
<div class="cell " style="left:1104px;width:126px;top:508px">5条/1日</div>
<div class="cell gy" style="left:1230px;width:126px;top:505px">0%</div>
<div class="ab" style="left:1254px;top:520px;width:80px;height:8px;border-radius:4px;background:#eeeeee"></div>
<div class="cell rd" style="left:1356px;width:124px;top:508px">未达标</div>
<div class="cell " style="left:1480px;width:127px;top:508px">25-12-08 00:05</div>
<div class="cell gy" style="left:1607px;width:102px;top:508px">未点评</div>
<svg class="ab" style="left:1722px;top:507px" width="60" height="18" viewBox="0 0 60 18"><g fill="none" stroke-linecap="round"><circle cx="7.2" cy="6.6" r="5.5" stroke="#ea6c2c" stroke-width="1.5"/><path d="M4.5 5.3 Q5 4 6.1 3.5" stroke="#ea6c2c" stroke-width="1"/><path d="M11.5 10.9 L14.2 13.8" stroke="#ea6c2c" stroke-width="2.4"/>
<path d="M27.8 16.2 H22.3 Q21 16.2 21 14.9 V2.1 Q21 0.9 22.2 0.9 H32.6 Q33.8 0.9 33.8 2.1 V7.3" stroke="#1db324" stroke-width="1.7" stroke-linecap="butt"/><path d="M24.2 6 H28.8 M24.2 9.9 H27" stroke="#1db324" stroke-width="1.6"/><path d="M29.6 8.9 H35.5 M29.6 16.3 H35.5 M30.6 9 Q30.6 11.4 32.55 12.6 Q30.6 13.8 30.6 16.2 M34.5 9 Q34.5 11.4 32.55 12.6 Q34.5 13.8 34.5 16.2" stroke="#1db324" stroke-width="1.5"/>
<path d="M42.8 6.6 H46 Q48 5.8 49 3.3 Q49.5 0.8 51 0.8 Q52.5 1.2 52 5.6 H56.3 Q58.1 6 57.6 8.3 L56.4 14.3 Q55.9 15.8 54.4 15.8 H42.8Z M45.8 6.8 V15.8" stroke="#fb7324" stroke-width="1.5" stroke-linejoin="round"/></g></svg>
<div class="cb" style="left:34px;top:549.5px;height:13.5px"></div>
<div class="cell lk" style="left:67px;width:126px;top:548px">经纪人日常量化</div>
<div class="cell " style="left:193px;width:125px;top:548px">安家地产总店</div>
<div class="cell lk" style="left:318px;width:123px;top:548px">王克东</div>
<div class="cell lk" style="left:441px;width:124px;top:548px">求购开拓</div>
<div class="cell " style="left:565px;width:124px;top:548px">本人</div>
<div class="cell " style="left:689px;width:167px;top:548px">25-12-05 至 <span class="or">25-12-11</span></div>
<div class="cell " style="left:856px;width:124px;top:548px">0</div>
<div class="cell " style="left:980px;width:124px;top:548px"></div>
<div class="cell " style="left:1104px;width:126px;top:548px">1个/1周</div>
<div class="cell gy" style="left:1230px;width:126px;top:545px">0%</div>
<div class="ab" style="left:1254px;top:560px;width:80px;height:8px;border-radius:4px;background:#eeeeee"></div>
<div class="cell gy" style="left:1356px;width:124px;top:548px">未汇报</div>
<div class="cell gy" style="left:1607px;width:102px;top:548px">未点评</div>
<svg class="ab" style="left:1722px;top:547px" width="60" height="18" viewBox="0 0 60 18"><g fill="none" stroke-linecap="round"><circle cx="7.2" cy="6.6" r="5.5" stroke="#ea6c2c" stroke-width="1.5"/><path d="M4.5 5.3 Q5 4 6.1 3.5" stroke="#ea6c2c" stroke-width="1"/><path d="M11.5 10.9 L14.2 13.8" stroke="#ea6c2c" stroke-width="2.4"/>
<path d="M27.8 16.2 H22.3 Q21 16.2 21 14.9 V2.1 Q21 0.9 22.2 0.9 H32.6 Q33.8 0.9 33.8 2.1 V7.3" stroke="#f07a35" stroke-width="1.7" stroke-linecap="butt"/><path d="M24.2 6 H28.8 M24.2 9.9 H27" stroke="#f07a35" stroke-width="1.6"/><path d="M29.6 8.9 H35.5 M29.6 16.3 H35.5 M30.6 9 Q30.6 11.4 32.55 12.6 Q30.6 13.8 30.6 16.2 M34.5 9 Q34.5 11.4 32.55 12.6 Q34.5 13.8 34.5 16.2" stroke="#f07a35" stroke-width="1.5"/>
<path d="M42.8 6.6 H46 Q48 5.8 49 3.3 Q49.5 0.8 51 0.8 Q52.5 1.2 52 5.6 H56.3 Q58.1 6 57.6 8.3 L56.4 14.3 Q55.9 15.8 54.4 15.8 H42.8Z M45.8 6.8 V15.8" stroke="#fb7324" stroke-width="1.5" stroke-linejoin="round"/></g></svg>
<div class="cb" style="left:34px;top:589.5px;height:13.5px"></div>
<div class="cell lk" style="left:67px;width:126px;top:588px">经纪人日常量化</div>
<div class="cell " style="left:193px;width:125px;top:588px">安家地产总店</div>
<div class="cell lk" style="left:318px;width:123px;top:588px">王克东</div>
<div class="cell lk" style="left:441px;width:124px;top:588px">求租开拓</div>
<div class="cell " style="left:565px;width:124px;top:588px">本人</div>
<div class="cell " style="left:689px;width:167px;top:588px">25-12-05 至 <span class="or">25-12-11</span></div>
<div class="cell " style="left:856px;width:124px;top:588px">0</div>
<div class="cell " style="left:980px;width:124px;top:588px"></div>
<div class="cell " style="left:1104px;width:126px;top:588px">1个/1周</div>
<div class="cell gy" style="left:1230px;width:126px;top:585px">0%</div>
<div class="ab" style="left:1254px;top:600px;width:80px;height:8px;border-radius:4px;background:#eeeeee"></div>
<div class="cell gy" style="left:1356px;width:124px;top:588px">未汇报</div>
<div class="cell gy" style="left:1607px;width:102px;top:588px">未点评</div>
<svg class="ab" style="left:1722px;top:587px" width="60" height="18" viewBox="0 0 60 18"><g fill="none" stroke-linecap="round"><circle cx="7.2" cy="6.6" r="5.5" stroke="#ea6c2c" stroke-width="1.5"/><path d="M4.5 5.3 Q5 4 6.1 3.5" stroke="#ea6c2c" stroke-width="1"/><path d="M11.5 10.9 L14.2 13.8" stroke="#ea6c2c" stroke-width="2.4"/>
<path d="M27.8 16.2 H22.3 Q21 16.2 21 14.9 V2.1 Q21 0.9 22.2 0.9 H32.6 Q33.8 0.9 33.8 2.1 V7.3" stroke="#f07a35" stroke-width="1.7" stroke-linecap="butt"/><path d="M24.2 6 H28.8 M24.2 9.9 H27" stroke="#f07a35" stroke-width="1.6"/><path d="M29.6 8.9 H35.5 M29.6 16.3 H35.5 M30.6 9 Q30.6 11.4 32.55 12.6 Q30.6 13.8 30.6 16.2 M34.5 9 Q34.5 11.4 32.55 12.6 Q34.5 13.8 34.5 16.2" stroke="#f07a35" stroke-width="1.5"/>
<path d="M42.8 6.6 H46 Q48 5.8 49 3.3 Q49.5 0.8 51 0.8 Q52.5 1.2 52 5.6 H56.3 Q58.1 6 57.6 8.3 L56.4 14.3 Q55.9 15.8 54.4 15.8 H42.8Z M45.8 6.8 V15.8" stroke="#fb7324" stroke-width="1.5" stroke-linejoin="round"/></g></svg>
<div class="cb" style="left:34px;top:629.5px;height:13.5px"></div>
<div class="cell lk" style="left:67px;width:126px;top:628px">经纪人日常量化</div>
<div class="cell " style="left:193px;width:125px;top:628px">安家地产总店</div>
<div class="cell lk" style="left:318px;width:123px;top:628px">王克东</div>
<div class="cell lk" style="left:441px;width:124px;top:628px">出租开拓</div>
<div class="cell " style="left:565px;width:124px;top:628px">本人</div>
<div class="cell " style="left:689px;width:167px;top:628px">25-12-05 至 <span class="or">25-12-11</span></div>
<div class="cell " style="left:856px;width:124px;top:628px">0</div>
<div class="cell " style="left:980px;width:124px;top:628px"></div>
<div class="cell " style="left:1104px;width:126px;top:628px">2个/1周</div>
<div class="cell gy" style="left:1230px;width:126px;top:625px">0%</div>
<div class="ab" style="left:1254px;top:640px;width:80px;height:8px;border-radius:4px;background:#eeeeee"></div>
<div class="cell gy" style="left:1356px;width:124px;top:628px">未汇报</div>
<div class="cell gy" style="left:1607px;width:102px;top:628px">未点评</div>
<svg class="ab" style="left:1722px;top:627px" width="60" height="18" viewBox="0 0 60 18"><g fill="none" stroke-linecap="round"><circle cx="7.2" cy="6.6" r="5.5" stroke="#ea6c2c" stroke-width="1.5"/><path d="M4.5 5.3 Q5 4 6.1 3.5" stroke="#ea6c2c" stroke-width="1"/><path d="M11.5 10.9 L14.2 13.8" stroke="#ea6c2c" stroke-width="2.4"/>
<path d="M27.8 16.2 H22.3 Q21 16.2 21 14.9 V2.1 Q21 0.9 22.2 0.9 H32.6 Q33.8 0.9 33.8 2.1 V7.3" stroke="#f07a35" stroke-width="1.7" stroke-linecap="butt"/><path d="M24.2 6 H28.8 M24.2 9.9 H27" stroke="#f07a35" stroke-width="1.6"/><path d="M29.6 8.9 H35.5 M29.6 16.3 H35.5 M30.6 9 Q30.6 11.4 32.55 12.6 Q30.6 13.8 30.6 16.2 M34.5 9 Q34.5 11.4 32.55 12.6 Q34.5 13.8 34.5 16.2" stroke="#f07a35" stroke-width="1.5"/>
<path d="M42.8 6.6 H46 Q48 5.8 49 3.3 Q49.5 0.8 51 0.8 Q52.5 1.2 52 5.6 H56.3 Q58.1 6 57.6 8.3 L56.4 14.3 Q55.9 15.8 54.4 15.8 H42.8Z M45.8 6.8 V15.8" stroke="#fb7324" stroke-width="1.5" stroke-linejoin="round"/></g></svg>
<div class="cb" style="left:34px;top:669.5px;height:13.5px"></div>
<div class="cell lk" style="left:67px;width:126px;top:668px">经纪人日常量化</div>
<div class="cell " style="left:193px;width:125px;top:668px">安家地产总店</div>
<div class="cell lk" style="left:318px;width:123px;top:668px">王克东</div>
<div class="cell lk" style="left:441px;width:124px;top:668px">出售开拓</div>
<div class="cell " style="left:565px;width:124px;top:668px">本人</div>
<div class="cell " style="left:689px;width:167px;top:668px">25-12-05 至 <span class="or">25-12-11</span></div>
<div class="cell " style="left:856px;width:124px;top:668px">0</div>
<div class="cell " style="left:980px;width:124px;top:668px"></div>
<div class="cell " style="left:1104px;width:126px;top:668px">2套/1周</div>
<div class="cell gy" style="left:1230px;width:126px;top:665px">0%</div>
<div class="ab" style="left:1254px;top:680px;width:80px;height:8px;border-radius:4px;background:#eeeeee"></div>
<div class="cell gy" style="left:1356px;width:124px;top:668px">未汇报</div>
<div class="cell gy" style="left:1607px;width:102px;top:668px">未点评</div>
<svg class="ab" style="left:1722px;top:667px" width="60" height="18" viewBox="0 0 60 18"><g fill="none" stroke-linecap="round"><circle cx="7.2" cy="6.6" r="5.5" stroke="#ea6c2c" stroke-width="1.5"/><path d="M4.5 5.3 Q5 4 6.1 3.5" stroke="#ea6c2c" stroke-width="1"/><path d="M11.5 10.9 L14.2 13.8" stroke="#ea6c2c" stroke-width="2.4"/>
<path d="M27.8 16.2 H22.3 Q21 16.2 21 14.9 V2.1 Q21 0.9 22.2 0.9 H32.6 Q33.8 0.9 33.8 2.1 V7.3" stroke="#f07a35" stroke-width="1.7" stroke-linecap="butt"/><path d="M24.2 6 H28.8 M24.2 9.9 H27" stroke="#f07a35" stroke-width="1.6"/><path d="M29.6 8.9 H35.5 M29.6 16.3 H35.5 M30.6 9 Q30.6 11.4 32.55 12.6 Q30.6 13.8 30.6 16.2 M34.5 9 Q34.5 11.4 32.55 12.6 Q34.5 13.8 34.5 16.2" stroke="#f07a35" stroke-width="1.5"/>
<path d="M42.8 6.6 H46 Q48 5.8 49 3.3 Q49.5 0.8 51 0.8 Q52.5 1.2 52 5.6 H56.3 Q58.1 6 57.6 8.3 L56.4 14.3 Q55.9 15.8 54.4 15.8 H42.8Z M45.8 6.8 V15.8" stroke="#fb7324" stroke-width="1.5" stroke-linejoin="round"/></g></svg>
<div class="cb" style="left:34px;top:709.5px;height:13.5px"></div>
<div class="cell lk" style="left:67px;width:126px;top:708px">经纪人日常量化</div>
<div class="cell " style="left:193px;width:125px;top:708px">安家地产总店</div>
<div class="cell lk" style="left:318px;width:123px;top:708px">王克东</div>
<div class="cell lk" style="left:441px;width:124px;top:708px">客户带看</div>
<div class="cell " style="left:565px;width:124px;top:708px">本人</div>
<div class="cell " style="left:689px;width:167px;top:708px">25-12-05 至 <span class="or">25-12-11</span></div>
<div class="cell " style="left:856px;width:124px;top:708px">0</div>
<div class="cell " style="left:980px;width:124px;top:708px"></div>
<div class="cell " style="left:1104px;width:126px;top:708px">2组/1周</div>
<div class="cell gy" style="left:1230px;width:126px;top:705px">0%</div>
<div class="ab" style="left:1254px;top:720px;width:80px;height:8px;border-radius:4px;background:#eeeeee"></div>
<div class="cell gy" style="left:1356px;width:124px;top:708px">未汇报</div>
<div class="cell gy" style="left:1607px;width:102px;top:708px">未点评</div>
<svg class="ab" style="left:1722px;top:707px" width="60" height="18" viewBox="0 0 60 18"><g fill="none" stroke-linecap="round"><circle cx="7.2" cy="6.6" r="5.5" stroke="#ea6c2c" stroke-width="1.5"/><path d="M4.5 5.3 Q5 4 6.1 3.5" stroke="#ea6c2c" stroke-width="1"/><path d="M11.5 10.9 L14.2 13.8" stroke="#ea6c2c" stroke-width="2.4"/>
<path d="M27.8 16.2 H22.3 Q21 16.2 21 14.9 V2.1 Q21 0.9 22.2 0.9 H32.6 Q33.8 0.9 33.8 2.1 V7.3" stroke="#f07a35" stroke-width="1.7" stroke-linecap="butt"/><path d="M24.2 6 H28.8 M24.2 9.9 H27" stroke="#f07a35" stroke-width="1.6"/><path d="M29.6 8.9 H35.5 M29.6 16.3 H35.5 M30.6 9 Q30.6 11.4 32.55 12.6 Q30.6 13.8 30.6 16.2 M34.5 9 Q34.5 11.4 32.55 12.6 Q34.5 13.8 34.5 16.2" stroke="#f07a35" stroke-width="1.5"/>
<path d="M42.8 6.6 H46 Q48 5.8 49 3.3 Q49.5 0.8 51 0.8 Q52.5 1.2 52 5.6 H56.3 Q58.1 6 57.6 8.3 L56.4 14.3 Q55.9 15.8 54.4 15.8 H42.8Z M45.8 6.8 V15.8" stroke="#fb7324" stroke-width="1.5" stroke-linejoin="round"/></g></svg>
<div class="ab" style="left:1825px;top:312px;width:2px;height:424px;background:#e4e6f2"></div>
<div class="ab" style="left:20px;top:312px;width:1px;height:424px;background:#e1e5ef"></div>
<div class="ab" style="left:1828px;top:167px;width:8px;height:569px;background:#e0e0e0;border-radius:3px 0 0 0"></div>
<div class="ab" style="left:1830px;top:168px;width:6px;height:491px;background:#7a7a7a;border-radius:3px"></div>
</body></html>
